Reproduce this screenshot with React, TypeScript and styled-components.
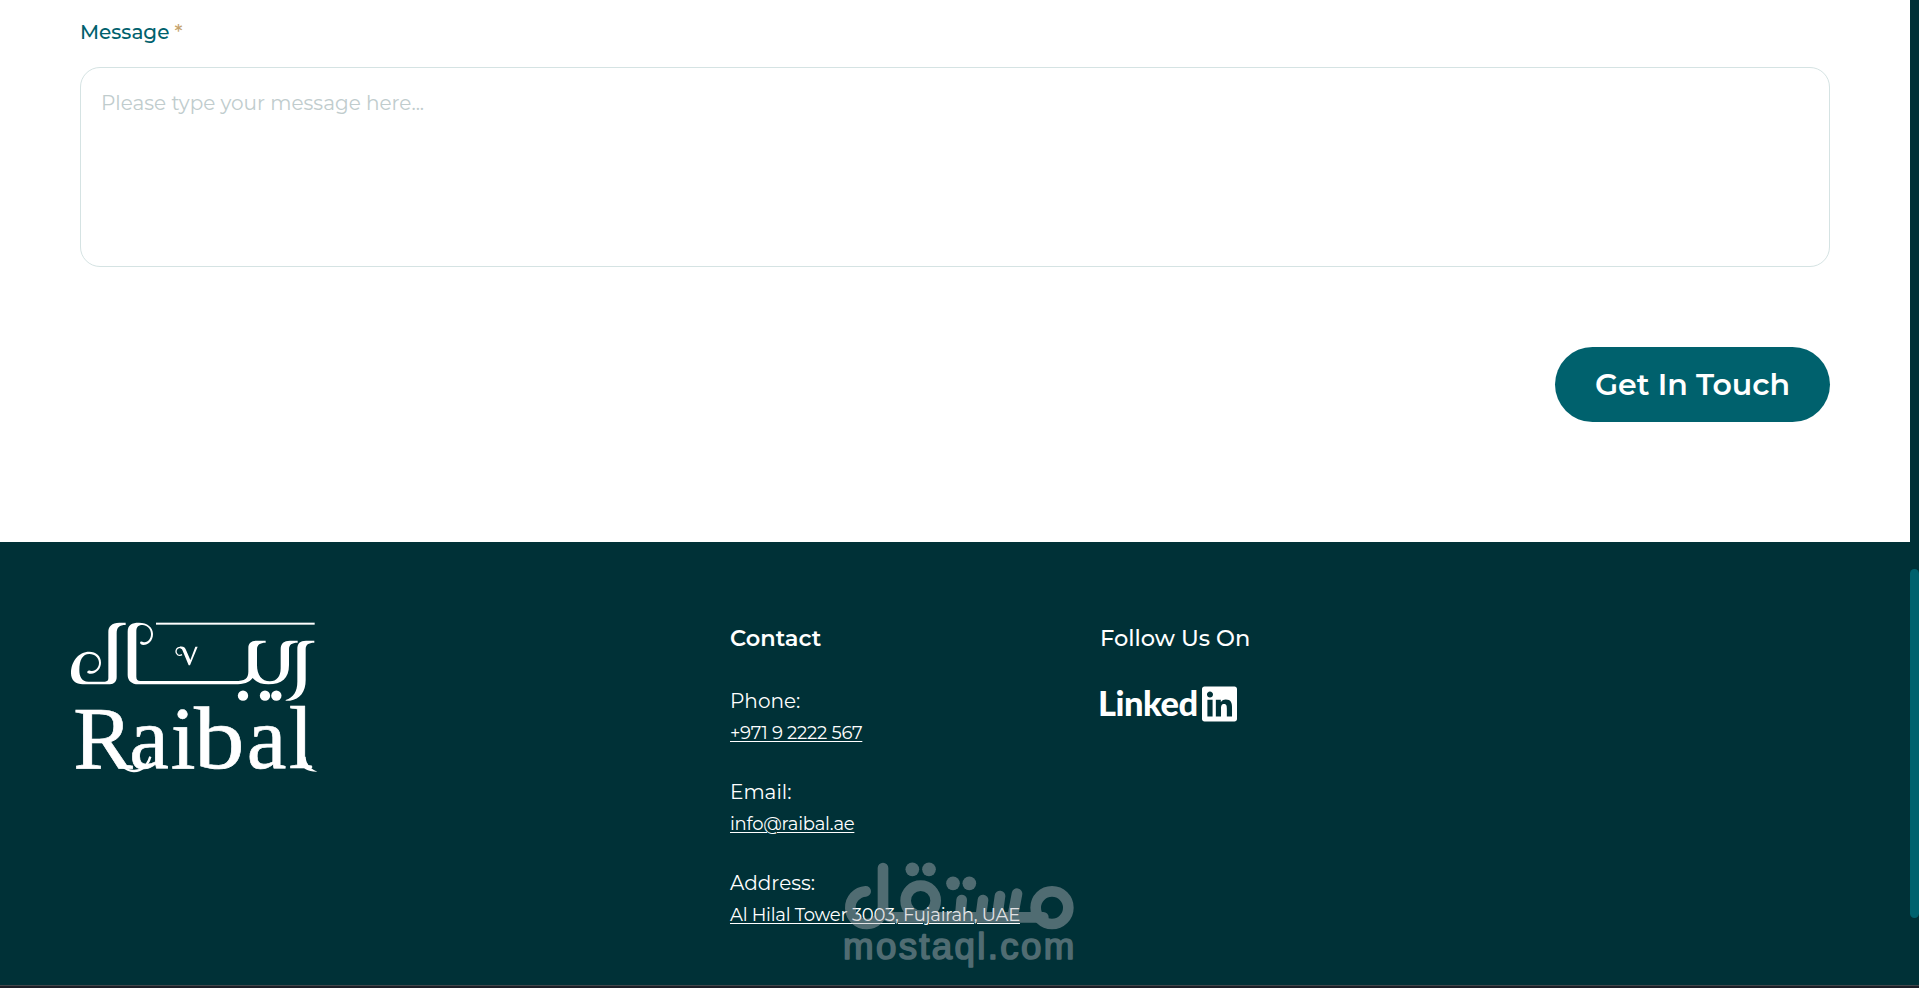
import React from "react";
import styled, { createGlobalStyle } from "styled-components";
import { FaLinkedin } from "react-icons/fa";

const GlobalStyle = createGlobalStyle`
  * { box-sizing: border-box; }
  body { margin: 0; background: #003137; overflow: hidden; }
`;

const Screen = styled.div`
  display: flex;
  width: 1919px;
  height: 988px;
  font-family: Montserrat, Inter, "Open Sans", sans-serif;
`;

const Page = styled.div`
  position: relative;
  display: flex;
  flex-direction: column;
  width: 1910px;
`;

const ScrollTrack = styled.div`
  width: 9px;
  padding-top: 569px;
  background: #003137;
`;

const ScrollThumb = styled.div`
  height: 349px;
  border-radius: 5px;
  background: #00616d;
`;

const FormSection = styled.form`
  display: flex;
  flex-direction: column;
  height: 542px;
  padding: 16px 80px 0;
  background: #fff;
`;

const FieldLabel = styled.label`
  display: flex;
  gap: 5px;
  margin-bottom: 19px;
  font-size: 20px;
  font-weight: 500;
  line-height: 32px;
  color: #00616d;
`;

const Required = styled.span`
  color: #c5a36c;
`;

const MessageBox = styled.textarea`
  display: block;
  width: 1750px;
  height: 200px;
  padding: 19px 20px;
  border: 1px solid #d5e3e3;
  border-radius: 20px;
  outline: none;
  resize: none;
  background: #fff;
  font: 400 20px/32px Montserrat, Inter, "Open Sans", sans-serif;
  &::placeholder { color: #c0cccd; opacity: 1; }
`;

const SubmitButton = styled.button`
  align-self: flex-end;
  width: 275px;
  height: 75px;
  margin-top: 80px;
  padding: 0;
  border: 0;
  border-radius: 38px;
  background: #00616d;
  color: #fff;
  font: 600 30px/75px Montserrat, Inter, "Open Sans", sans-serif;
`;

const Footer = styled.footer`
  display: grid;
  grid-template-columns: 660px 370px 1fr;
  height: 443px;
  padding: 80px 70px 0;
  background: #003137;
  color: #fff;
`;

const Column = styled.div`
  display: flex;
  flex-direction: column;
  align-items: flex-start;
`;

const ColumnTitle = styled.h3<{ $weight: number }>`
  margin: 0 0 31px;
  font-size: 22.5px;
  font-weight: ${(p) => p.$weight};
  line-height: 32px;
`;

const ContactItem = styled.div`
  display: flex;
  flex-direction: column;
  align-items: flex-start;
  margin-bottom: 26px;
  white-space: nowrap;
`;

const ItemLabel = styled.span`
  font-size: 20px;
  line-height: 32px;
`;

const ItemLink = styled.a`
  font-size: 18px;
  letter-spacing: -0.25px;
  line-height: 33px;
  color: #fff;
  text-decoration: underline;
  text-decoration-thickness: 1px;
  text-underline-offset: 2px;
`;

const LinkedInLogo = styled.a`
  display: flex;
  align-items: center;
  gap: 5px;
  height: 37px;
  margin-left: -2px;
  color: #fff;
  font: 900 34.5px/35px Lato, sans-serif;
  svg { width: 35px; height: 40px; }
`;

const LinkedWord = styled.span`
  width: 99px;
  height: 37px;
  letter-spacing: -0.5px;
`;

const BottomEdge = styled.div`
  width: 1919px;
  height: 3px;
  border-top: 1px solid #43474b;
  background: #1c1f27;
`;

const Watermark = styled.svg`
  position: absolute;
  left: 830px;
  top: 850px;
  width: 260px;
  height: 138px;
  pointer-events: none;
`;

const RaibalLogo = () => (
  <svg width="250" height="152" viewBox="30 36 750 456" fill="#fff" overflow="visible">
    <path d="M197 38H178C155 38 145 50 145 65V205Q145 215 135 215H85C65 215 58 200 58 180C58 150 68 132 88 132C106 132 117 145 117 158C117 172 108 182 96 183C90 183 87 179 83 183C79 190 86 192 93 191C110 190 123 175 123 158C123 138 108 125 88 125C55 125 33 155 33 190C33 212 48 223 68 223H150C162 223 170 214 170 202V70C170 52 178 45 197 45Z" />
    <path d="M203 65C203 45 215 38 237 38C262 38 279 52 279 72C279 92 265 105 250 105C243 105 238 100 241 96C244 92 250 97 254 97C265 95 273 86 273 72C273 56 260 45 248 45C233 45 229 52 229 65V200Q229 213 241 213H525C555 213 565 205 565 185V115C565 98 575 92 592 92H617V98C600 98 591 104 591 118V165C591 195 605 214 630 214C650 214 662 200 662 175V118C662 100 672 92 690 92H713V98C695 98 687 104 687 118V165C687 205 665 223 625 223C605 223 588 216 578 204C568 218 550 223 525 223H235C215 223 203 212 203 195Z" />
    <path d="M763 92H738C720 92 712 100 712 118V215C712 245 700 262 677 270V272H690C720 268 737 245 737 210V118C737 104 745 98 763 98Z" />
    <circle cx="549" cy="257" r="15.5" />
    <circle cx="615" cy="257" r="15.5" />
    <circle cx="649" cy="257" r="15.5" />
    <rect x="288" y="38" width="476" height="6" />
    <path d="M366 134C356 140 347 132 348 123C349 114 358 110 365 113" fill="none" stroke="#fff" strokeWidth="4" />
    <path d="M360 110C372 109 376 114 379 122L391 150L406 110H413L390 166H386L368 122C366 116 360 115 360 115Z" />
    <g fontFamily="'Liberation Serif', serif" fontSize="268" stroke="#fff" strokeWidth="2">
      <text x="40 208 332" y="473">Rai</text>
      <text transform="translate(402 473) scale(1.13 1)">b</text>
      <text x="560 686" y="473">al</text>
    </g>
    <path d="M160 430C190 500 255 498 271 440" fill="none" stroke="#fff" strokeWidth="7" />
    <path d="M716 440C718 470 738 486 772 485C752 478 738 462 737 440Z" />
  </svg>
);

const MostaqlMark = () => (
  <Watermark viewBox="0 0 780 414">
    <g opacity="0.43" fill="#babac0">
      <g fill="none" stroke="#babac0" strokeWidth="32" strokeLinecap="round">
        <path d="M107 124A49 49 0 1 0 159 173V54" />
        <path d="M159 175Q164 202 192 202H640" />
        <circle cx="272" cy="152" r="45" />
        <circle cx="666" cy="173" r="49" />
        <path d="M395 150L391 195M459 150L453 195M510 138L502 195M561 131L549 195" />
      </g>
      <circle cx="247" cy="58" r="20.5" />
      <circle cx="297" cy="58" r="20.5" />
      <circle cx="369" cy="100" r="20.5" />
      <circle cx="418" cy="100" r="20.5" />
      <text
        x="39"
        y="327"
        textLength="694"
        fontFamily="'Liberation Sans', sans-serif"
        fontSize="110"
        stroke="#babac0"
        strokeWidth="5"
        strokeLinejoin="round"
      >
        mostaql.com
      </text>
    </g>
  </Watermark>
);

const contacts = [
  { label: "Phone:", value: "+971 9 2222 567" },
  { label: "Email:", value: "info@raibal.ae" },
  { label: "Address:", value: "Al Hilal Tower 3003, Fujairah, UAE" },
];

export default function App() {
  return (
    <>
      <GlobalStyle />
      <Screen>
        <Page>
          <FormSection>
            <FieldLabel>
              Message
              <Required>*</Required>
            </FieldLabel>
            <MessageBox placeholder="Please type your message here..." />
            <SubmitButton type="button">Get In Touch</SubmitButton>
          </FormSection>
          <Footer>
            <RaibalLogo />
            <Column>
              <ColumnTitle $weight={600}>Contact</ColumnTitle>
              {contacts.map((c) => (
                <ContactItem key={c.label}>
                  <ItemLabel>{c.label}</ItemLabel>
                  <ItemLink>{c.value}</ItemLink>
                </ContactItem>
              ))}
            </Column>
            <Column>
              <ColumnTitle $weight={500}>Follow Us On</ColumnTitle>
              <LinkedInLogo>
                <LinkedWord>Linked</LinkedWord>
                <FaLinkedin />
              </LinkedInLogo>
            </Column>
          </Footer>
          <BottomEdge />
          <MostaqlMark />
        </Page>
        <ScrollTrack>
          <ScrollThumb />
        </ScrollTrack>
      </Screen>
    </>
  );
}
